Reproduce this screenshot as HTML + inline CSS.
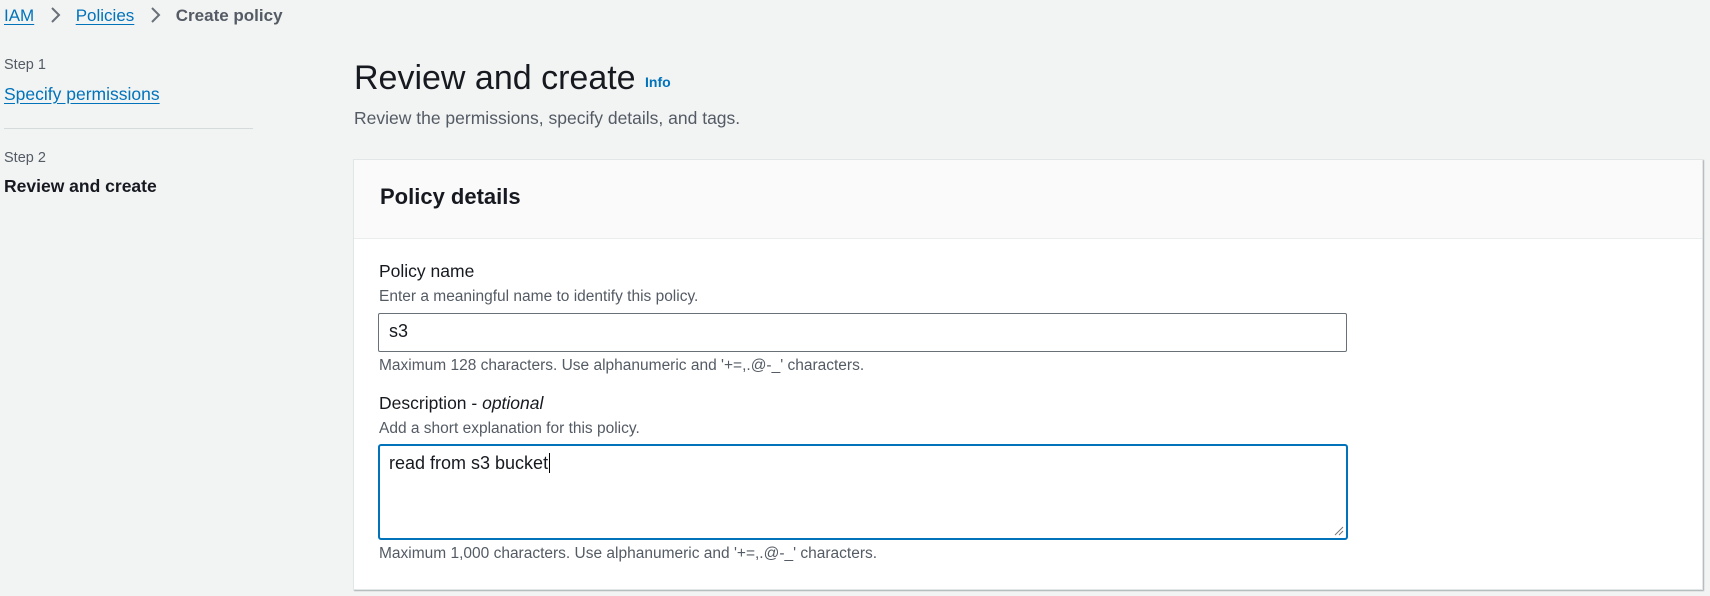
<!DOCTYPE html>
<html><head><style>
*{box-sizing:border-box;margin:0;padding:0}
body{width:1710px;height:596px;background:#f2f3f3;font-family:"Liberation Sans",sans-serif;color:#16191f;position:relative;overflow:hidden}
.a{position:absolute;white-space:nowrap}
.link{color:#0073bb;text-decoration:underline;text-underline-offset:3px}
.muted{color:#545b64}
</style></head><body>
<div class="a" style="left:4px;top:5px;font-size:17px;line-height:22px">
<span class="link">IAM</span>
<svg width="16" height="18" viewBox="0 0 16 18" style="margin:0 8px;vertical-align:-3px"><path d="M5 2l7 7-7 7" fill="none" stroke="#687078" stroke-width="2"/></svg>
<span class="link">Policies</span>
<svg width="16" height="18" viewBox="0 0 16 18" style="margin:0 8px;vertical-align:-3px"><path d="M5 2l7 7-7 7" fill="none" stroke="#687078" stroke-width="2"/></svg>
<span style="color:#545b64;font-weight:bold">Create policy</span>
</div>
<div class="a muted" style="left:4px;top:57px;font-size:14.5px">Step 1</div>
<div class="a link" style="left:4px;top:84px;font-size:17.5px">Specify permissions</div>
<div class="a" style="left:4px;top:128px;width:249px;height:1px;background:#d5dbdb"></div>
<div class="a muted" style="left:4px;top:150px;font-size:14.5px">Step 2</div>
<div class="a" style="left:4px;top:176px;font-size:17.5px;font-weight:bold">Review and create</div>

<div class="a" style="left:354px;top:58px;font-size:34px;line-height:40px">Review and create <span style="font-size:14px;font-weight:bold;color:#0073bb;vertical-align:2px">Info</span></div>
<div class="a muted" style="left:354px;top:108px;font-size:17.5px">Review the permissions, specify details, and tags.</div>

<div class="a" style="left:353px;top:159px;width:1350px;height:431px;background:#fff;border:1px solid #e3e6e6;box-shadow:1px 1px 1px rgba(0,28,36,.3)">
<div style="height:79px;background:#fafafa;border-bottom:1px solid #eaeded"></div>
</div>
<div class="a" style="left:380px;top:184px;font-size:22px;font-weight:bold">Policy details</div>
<div class="a" style="left:379px;top:261px;font-size:17.5px">Policy name</div>
<div class="a muted" style="left:379px;top:288px;font-size:15.5px">Enter a meaningful name to identify this policy.</div>
<div class="a" style="left:378px;top:313px;width:969px;height:39px;border:1px solid #687078;border-radius:2px;background:#fff;font-size:18px;padding:7px 10px">s3</div>
<div class="a muted" style="left:379px;top:357px;font-size:15.5px">Maximum 128 characters. Use alphanumeric and '+=,.@-_' characters.</div>
<div class="a" style="left:379px;top:393px;font-size:17.5px">Description - <i>optional</i></div>
<div class="a muted" style="left:379px;top:420px;font-size:15.5px">Add a short explanation for this policy.</div>
<div class="a" style="left:378px;top:444px;width:970px;height:96px;border:2px solid #0073bb;border-radius:3px;background:#fff;font-size:18px;padding:7px 9px">read from s3 bucket<span style="border-left:1px solid #000;margin-left:1px"></span>
<svg width="10" height="10" viewBox="0 0 10 10" style="position:absolute;right:2px;bottom:2px"><path d="M1 9L9 1M5 9L9 5" stroke="#777" stroke-width="1"/></svg></div>
<div class="a muted" style="left:379px;top:545px;font-size:15.5px">Maximum 1,000 characters. Use alphanumeric and '+=,.@-_' characters.</div>
</body></html>
